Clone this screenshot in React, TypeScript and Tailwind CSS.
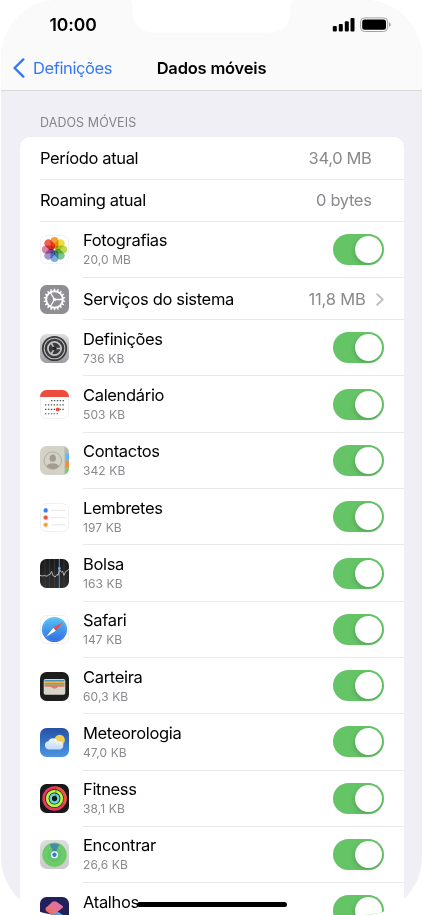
import React from 'react';

interface AppRow {
  name: string;
  usage?: string;
  icon: React.ReactNode;
  link?: boolean;
}

const IconFrame: React.FC<{ className?: string; children: React.ReactNode }> = ({ className = '', children }) => (
  <span className={`-ml-[0.5px] block h-[29px] w-[29px] shrink-0 overflow-hidden rounded-[6.5px] ${className}`}>
    <svg viewBox="0 0 29 29" className="block h-full w-full" fill="none">{children}</svg>
  </span>
);

const petals = ['#f7941e', '#e8dc2a', '#b5d544', '#6cbf8a', '#6aa5e0', '#9a86cc', '#d0789f', '#ef4b3c'];

const PhotosIcon = () => (
  <IconFrame className="bg-white shadow-[inset_0_0_0_1px_#f1f1f1]">
    {petals.map((color, i) => (
      <rect key={color} x="10.5" y="1.9" width="8" height="11.8" rx="4" fill={color} fillOpacity="0.9" transform={`rotate(${i * 45} 14.5 14.5)`} className="mix-blend-multiply" />
    ))}
  </IconFrame>
);

const teeth = Array.from({ length: 18 }).map((_, i) => i * 20);

const SystemIcon = () => (
  <IconFrame className="bg-[#8e8e93]">
    <g stroke="#fff">
      <circle cx="14.5" cy="14.5" r="8.3" strokeWidth="1.9" />
      {teeth.map((deg) => (
        <path key={deg} d="M14.5 3.7v2.4" strokeWidth="1.5" transform={`rotate(${deg} 14.5 14.5)`} />
      ))}
      <path d="M14.5 14.5h8M14.5 14.5l-4.2-7M14.5 14.5l-4.2 7" strokeWidth="1.3" />
    </g>
    <circle cx="14.5" cy="14.5" r="1.5" fill="#fff" />
  </IconFrame>
);

const SettingsIcon = () => (
  <IconFrame className="bg-linear-to-b from-[#dededf] to-[#9d9da1]">
    <circle cx="14.5" cy="14.5" r="12.6" fill="#3b3b3d" />
    <circle cx="14.5" cy="14.5" r="10.3" stroke="#b9b9bb" strokeWidth="1.1" />
    <circle cx="14.5" cy="14.5" r="6.6" stroke="#c1c1c3" strokeWidth="1.8" />
    <path d="M14.5 14.5h7M14.5 14.5l-3.6-6M14.5 14.5l-3.6 6" stroke="#c1c1c3" strokeWidth="1.5" />
    <circle cx="14.5" cy="14.5" r="2.1" fill="#29292b" />
  </IconFrame>
);

const CalendarIcon = () => (
  <IconFrame className="bg-white shadow-[inset_0_0_0_1px_#f0f0f0]">
    <path d="M0 0h29v7H0z" fill="#ec4d3d" />
    <g stroke="#555" strokeWidth="1.1" strokeDasharray="1.4 1.5">
      <path d="M11 10.6h14M5 14.9h20M5 19.4h20M5 23.7h13.5" />
    </g>
    <circle cx="17.8" cy="19.4" r="2" fill="#ec4d3d" />
  </IconFrame>
);

const ContactsIcon = () => (
  <IconFrame className="bg-[#d2d2c6]">
    <path d="M25.2 0H29v7.3h-3.8z" fill="#b9b9b1" />
    <path d="M25.2 7.2H29v7.6h-3.8z" fill="#69b7f2" />
    <path d="M25.2 14.8H29v7.6h-3.8z" fill="#ee9234" />
    <path d="M25.2 22.4H29V29h-3.8z" fill="#71cc73" />
    <path d="M25 0v29" stroke="#aeb0a3" strokeWidth="0.7" />
    <circle cx="12.8" cy="14.6" r="8.7" stroke="#aaa297" strokeWidth="0.8" />
    <ellipse cx="12.8" cy="12.2" rx="3.1" ry="3.6" fill="#a49b91" />
    <path d="M6.4 20.3c1.2-2.3 3.6-3.1 6.4-3.1s5.2.8 6.4 3.1a8.6 8.6 0 0 1-12.8 0z" fill="#a49b91" />
  </IconFrame>
);

const RemindersIcon = () => (
  <IconFrame className="bg-white shadow-[inset_0_0_0_1px_#f0f0f0]">
    {['#3479f6', '#eb4e3d', '#f19a37'].map((color, i) => (
      <g key={color}>
        <circle cx="5.7" cy={7.4 + i * 7.2} r="2.6" fill={color} fillOpacity="0.4" />
        <circle cx="5.7" cy={7.4 + i * 7.2} r="1.8" fill={color} />
        <path d={`M11 ${7.4 + i * 7.2}h14.5`} stroke="#dedee2" strokeWidth="0.7" />
      </g>
    ))}
  </IconFrame>
);

const StocksIcon = () => (
  <IconFrame className="bg-linear-to-b from-[#1a1a1b] to-[#303031]">
    <path d="M5 0v29M9.5 0v29M14.5 0v29M24 0v29" stroke="#454547" strokeWidth="0.6" />
    <path d="M19.3 0v29" stroke="#4898df" strokeWidth="1" />
    <path d="M0 16.3L2 17l2.5-.4L7 17.2l1.8-1.4 1.4-.4 1.3-3L13.3 17l1.9 1 1.6-2.4 1.4.6 1.1-6 2 3 1.3-.8 1.3 4 1.9-4 1.5-.6L29 10" stroke="#d4d4d4" strokeWidth="0.8" />
    <circle cx="19.3" cy="9.4" r="1.4" fill="#55a9f1" />
  </IconFrame>
);

const SafariIcon = () => (
  <IconFrame className="bg-white shadow-[inset_0_0_0_1px_#f0f0f0]">
    <defs>
      <linearGradient id="safari" x2="0" y2="1">
        <stop stopColor="#5ac5f3" />
        <stop offset="1" stopColor="#2f68e4" />
      </linearGradient>
    </defs>
    <circle cx="14.5" cy="14.5" r="12.6" fill="url(#safari)" />
    <circle cx="14.5" cy="14.5" r="11.3" stroke="#cfe9ff" strokeOpacity="0.45" strokeWidth="1" strokeDasharray="0.4 0.8" />
    <path d="M22.8 7.3L13.3 12.8l2.5 2.9z" fill="#ec4d43" />
    <path d="M6 22l7.3-9.2 2.5 2.9z" fill="#fff" />
  </IconFrame>
);

const WalletIcon = () => (
  <IconFrame className="bg-[#1d1d1e]">
    <rect x="3.7" y="7" width="21.6" height="15.8" rx="1.8" fill="#d5d5ca" />
    <path d="M4.5 7.9h20v1.9h-20z" fill="#4a93ba" />
    <path d="M4.5 9.6h20v1.7h-20z" fill="#e9b44a" />
    <path d="M4.5 11.1h20v1.7h-20z" fill="#71b456" />
    <path d="M4.5 12.7h20v2.1h-6.2c-1 0-1.2 1.9-3.8 1.9s-2.8-1.9-3.8-1.9H4.5z" fill="#e9766b" />
  </IconFrame>
);

const WeatherIcon = () => (
  <IconFrame className="bg-linear-to-b from-[#2551a5] to-[#4c96e3]">
    <defs>
      <linearGradient id="cloud" x2="0" y2="1">
        <stop stopColor="#fff" />
        <stop offset="1" stopColor="#cde3fa" />
      </linearGradient>
    </defs>
    <circle cx="19.7" cy="12" r="5.2" fill="#f5ce50" />
    <path d="M8.8 21.5a4.2 4.2 0 0 1-.5-8.3 5.2 5.2 0 0 1 9.5.2 4.2 4.2 0 1 1 .7 8.1z" fill="url(#cloud)" fillOpacity="0.92" />
  </IconFrame>
);

const FitnessIcon = () => (
  <IconFrame className="bg-[#181819]">
    <circle cx="14.5" cy="14.5" r="10.8" stroke="#e83664" strokeWidth="2.8" />
    <path d="M14.5 3.7a10.8 10.8 0 0 1 9.4 16.2" stroke="#ee5248" strokeWidth="2.8" />
    <circle cx="14.5" cy="14.5" r="7.3" stroke="#b7f23e" strokeWidth="2.8" />
    <circle cx="14.5" cy="14.5" r="3.9" stroke="#65d9df" strokeWidth="2.5" />
    <path d="M15.8 2.3v3.5M15.8 6v3M15.8 9.5V12" stroke="#181819" strokeWidth="0.4" />
  </IconFrame>
);

const FindMyIcon = () => (
  <IconFrame className="bg-linear-to-b from-[#dddddc] to-[#cacaca]">
    <circle cx="14.5" cy="14.7" r="12.2" fill="#6bcb67" />
    <circle cx="14.5" cy="14.7" r="8" fill="#64c467" stroke="#83d77b" strokeWidth="0.5" />
    <path d="M14.5 14.5L9.6 4.6q4.9-2.2 9.8 0z" fill="#3d82b4" fillOpacity="0.85" />
    <circle cx="14.5" cy="14.7" r="3.5" fill="#fff" />
    <circle cx="14.5" cy="14.7" r="2.2" fill="#3276ed" />
  </IconFrame>
);

const ShortcutsIcon = () => (
  <IconFrame className="bg-[#21205a]">
    <defs>
      <linearGradient id="top-layer" x1="0" y1="1" x2="1" y2="0">
        <stop stopColor="#f0785c" />
        <stop offset="1" stopColor="#d76ec0" />
      </linearGradient>
    </defs>
    <path d="M14.7 12.8l8.4 5.2c1 .7 1 1.5 0 2.2L14.7 25 7 20z" fill="#4fa6e9" />
    <path d="M12.5 4.8c1.3-.9 2.7-.9 4 0l5.8 3.9c1 .8 1 1.500 0 2.3L15 16.700c-.8.6-1.8.6-2.6 0l-5.800-4c-1-.8-1-1.600 0-2.400z" fill="url(#top-layer)" />
    <path d="M6.3 10l8 7.8-1.700 1-6.200-4.600c-1.200-1-1.200-2.900-.1-4.200z" fill="#e86c67" />
  </IconFrame>
);

const rows: AppRow[] = [
  { name: 'Fotografias', usage: '20,0 MB', icon: <PhotosIcon /> },
  { name: 'Serviços do sistema', usage: '11,8 MB', icon: <SystemIcon />, link: true },
  { name: 'Definições', usage: '736 KB', icon: <SettingsIcon /> },
  { name: 'Calendário', usage: '503 KB', icon: <CalendarIcon /> },
  { name: 'Contactos', usage: '342 KB', icon: <ContactsIcon /> },
  { name: 'Lembretes', usage: '197 KB', icon: <RemindersIcon /> },
  { name: 'Bolsa', usage: '163 KB', icon: <StocksIcon /> },
  { name: 'Safari', usage: '147 KB', icon: <SafariIcon /> },
  { name: 'Carteira', usage: '60,3 KB', icon: <WalletIcon /> },
  { name: 'Meteorologia', usage: '47,0 KB', icon: <WeatherIcon /> },
  { name: 'Fitness', usage: '38,1 KB', icon: <FitnessIcon /> },
  { name: 'Encontrar', usage: '26,6 KB', icon: <FindMyIcon /> },
  { name: 'Atalhos', icon: <ShortcutsIcon /> },
];

const Toggle = () => (
  <button role="switch" aria-checked="true" className="flex h-[31px] w-[51px] shrink-0 items-center justify-end rounded-full bg-[#65c466] pr-[2px]">
    <span className="h-[27px] w-[27px] rounded-full bg-white shadow-[-1px_2px_4px_rgba(0,0,0,0.16)]" />
  </button>
);

const StatusBar = () => (
  <div className="flex h-[46px] items-start justify-between pl-[49.5px] pr-[32px]">
    <span className="pt-[14px] text-[17.5px] font-semibold leading-[22px] tracking-[-0.1px]">10:00</span>
    <div className="flex gap-[5px] pt-[17px]">
      <svg width="23" height="15" viewBox="0 0 23 15">
        <rect x="0.8" y="9" width="4" height="5.6" rx="1" />
        <rect x="6.8" y="7" width="4" height="7.6" rx="1" />
        <rect x="12.8" y="4.2" width="4" height="10.4" rx="1" />
        <rect x="18.5" y="1" width="4" height="13.6" rx="1" />
      </svg>
      <svg width="31" height="15" viewBox="0 0 31 15">
        <rect x="0.6" y="0.9" width="27" height="13.6" rx="4" fill="none" stroke="#a3a3a3" />
        <rect x="2.2" y="2.6" width="23.8" height="10.2" rx="2.4" />
        <path d="M29 5.6c2.3.6 2.3 3.5 0 4.1z" fill="#a3a3a3" />
      </svg>
    </div>
  </div>
);

const App: React.FC = () => {
  return (
    <div className="h-[915px] w-[423px] overflow-hidden bg-white font-['Inter',sans-serif] text-black">
      <div className="relative mx-px h-full overflow-hidden rounded-[58px] bg-[#f0eff5]">
        <header className="-mx-px h-[91px] border-b border-[#d9d9dc] bg-[#fafafa]">
          <StatusBar />
          <div className="relative flex h-[44px] items-center justify-center">
            <a className="absolute left-[13px] flex items-center gap-[8px] text-[#3478f6]">
              <svg width="12" height="20" viewBox="0 0 12 20" fill="none">
                <path d="M10.3 1.4L1.6 10l8.7 8.6" stroke="currentColor" strokeWidth="2.4" strokeLinecap="round" strokeLinejoin="round" />
              </svg>
              <span className="text-[16.5px] tracking-[-0.4px]">Definições</span>
            </a>
            <h1 className="text-[16.5px] font-semibold tracking-[-0.2px]">Dados móveis</h1>
          </div>
        </header>
        <svg className="absolute left-[126px] top-0" width="168" height="33" viewBox="0 0 168 33">
          <path d="M0 0c4 0 5.6 2 5.6 6v5c0 13 8.4 21.5 21.4 21.5h116c13 0 20.4-8.5 20.4-21.5V6c0-4 1.2-6 4.6-6z" fill="#fff" />
        </svg>

        <main className="pl-[19px] pr-[18.5px]">
          <h2 className="h-[46px] pl-[20px] pt-[24px] text-[12.5px] leading-[16px] tracking-[0.08px] text-[#85858a]">DADOS MÓVEIS</h2>
          <div className="rounded-[10px] bg-white pl-[20px]">
            <div className="flex h-[42.5px] items-center justify-between border-b border-[#e9e9eb] pr-[32px] pt-[2px] text-[16.5px] tracking-[-0.35px]">
              <span>Período atual</span>
              <span className="text-[#8a8a8e]">34,0 MB</span>
            </div>
            <div className="flex h-[42.2px] items-center justify-between border-b border-[#e9e9eb] pr-[32px] pt-[1px] text-[16.5px] tracking-[-0.35px]">
              <span>Roaming atual</span>
              <span className="text-[#8a8a8e]">0 bytes</span>
            </div>
            {rows.map((row) => (
              <div key={row.name} className={`flex items-center ${row.link ? 'h-[42.2px]' : 'h-[56.3px]'}`}>
                {row.icon}
                <div className="ml-[14.5px] flex h-full flex-1 items-center justify-between border-b border-[#e9e9eb] pr-[20px]">
                  <div className={row.link ? 'pt-px' : ''}>
                    <div className="text-[16.5px] leading-[20px] tracking-[-0.33px]">{row.name}</div>
                    {!row.link && <div className="mt-[2px] h-[16px] text-[12px] leading-[16px] tracking-[0.1px] text-[#8a8a8e]">{row.usage}</div>}
                  </div>
                  {row.link ? (
                    <div className="flex items-center gap-[10px] pt-px text-[#8a8a8e]">
                      <span className="text-[16.5px] tracking-[-0.2px]">{row.usage}</span>
                      <svg width="8" height="13" viewBox="0 0 8 13" fill="none">
                        <path d="M1.2 1.2l5.5 5.3-5.5 5.3" stroke="#c0c0c3" strokeWidth="1.9" strokeLinecap="round" strokeLinejoin="round" />
                      </svg>
                    </div>
                  ) : (
                    <Toggle />
                  )}
                </div>
              </div>
            ))}
          </div>
        </main>
        <div className="absolute left-[136px] top-[902px] h-[5px] w-[150px] rounded-full bg-black" />
      </div>
    </div>
  );
};

export default App;
